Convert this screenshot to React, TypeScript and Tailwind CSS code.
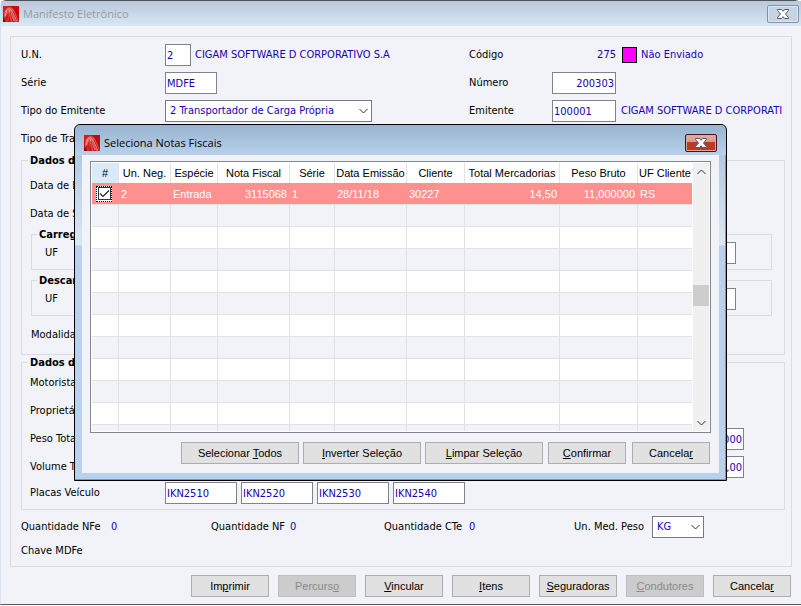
import { useState } from 'react'
import type { ReactNode } from 'react'

const COLUMNS = [
  { label: '#', width: 27, align: 'text-center' },
  { label: 'Un. Neg.', width: 52, align: 'text-left' },
  { label: 'Espécie', width: 47, align: 'text-left' },
  { label: 'Nota Fiscal', width: 72, align: 'text-right' },
  { label: 'Série', width: 45, align: 'text-left' },
  { label: 'Data Emissão', width: 72, align: 'text-left' },
  { label: 'Cliente', width: 58, align: 'text-left' },
  { label: 'Total Mercadorias', width: 95, align: 'text-right' },
  { label: 'Peso Bruto', width: 78, align: 'text-right' },
  { label: 'UF Cliente', width: 54, align: 'text-left' },
]

const NOTA = ['2', 'Entrada', '3115068', '1', '28/11/18', '30227', '14,50', '11,000000', 'RS']
const PLACAS = ['IKN2510', 'IKN2520', 'IKN2530', 'IKN2540']
const EMPTY_ROWS = 10

const inputClass = 'h-[22px] shrink-0 border border-[#7f838c] bg-white px-px text-[#1a00b0] outline-none'
const buttonClass =
  'h-[22px] border border-[#adadad] bg-[#e1e1e1] text-[11px] text-black outline-none disabled:border-[#bfbfbf] disabled:bg-[#cccccc] disabled:text-[#8a8a8a]'

function Logo() {
  return (
    <svg className="h-4 w-4 shrink-0" viewBox="0 0 16 16">
      <rect width="16" height="16" fill="#cf1014" />
      <path d="M0 0h7L2 5 0 9z" fill="#e0171a" />
      <path d="M9 0h7v14L12 5z" fill="#c40a0c" />
      <path d="M1 7Q2 2 6 1q4 0 6 5l4 10h-4L9 9l1 7H8L6 8l-1 8H3l1-7-3 4z" fill="#e0514d" />
      <path d="M2 6Q5 2 7 3q4 3 7 12M6 4l5 11M4 5L2 10" fill="none" stroke="#f6a8a2" strokeWidth=".8" />
      <path d="M7 6l3 10M5 7l-1 9M10 5l5 11" fill="none" stroke="#7e0a0a" strokeWidth=".6" />
      <path d="M0 11l3 5H0z" fill="#8d0506" />
    </svg>
  )
}

function CloseMark() {
  return (
    <svg className="h-[10px] w-3" viewBox="0 0 12 10">
      <path
        d="M.5 .5h4L6 2.300 7.500 .5h4v1L8.500 5l3 3.500v1h-4L6 7.700 4.500 9.500h-4v-1l3-3.500-3-3.500z"
        fill="#fff"
        stroke="#535968"
        strokeWidth="1"
      />
    </svg>
  )
}

function Chevron({ up = false, className = '' }: { up?: boolean; className?: string }) {
  return (
    <svg
      className={`pointer-events-none h-[6px] w-[9px] ${className}`}
      viewBox="0 0 9 6"
      fill="none"
      stroke="currentColor"
    >
      <path d={up ? 'M.5 5l4-4 4 4' : 'M.5 1l4 4 4-4'} />
    </svg>
  )
}

function Row({ label, id, children }: { label: string; id?: string; children?: ReactNode }) {
  return (
    <div className="flex h-7 items-center">
      <label htmlFor={id} className="w-36 shrink-0 whitespace-nowrap">{label}</label>
      {children}
    </div>
  )
}

function Group({ title, className, children }: { title: string; className: string; children: ReactNode }) {
  return (
    <fieldset className={`min-w-0 border border-[#dcdcdc] ${className}`}>
      <legend className="px-[2px] pt-[2px] leading-3 font-bold whitespace-nowrap">{title}</legend>
      {children}
    </fieldset>
  )
}

function Select({ id, value, className }: { id: string; value: string; className: string }) {
  return (
    <div className={`relative shrink-0 ${className}`}>
      <select
        id={id}
        defaultValue={value}
        className="h-[22px] w-full appearance-none border border-[#7a7a7a] bg-white pl-1 text-[#1a00b0] outline-none"
      >
        <option>{value}</option>
      </select>
      <Chevron className="absolute top-2 right-1 text-[#333]" />
    </div>
  )
}

function NotasDialog() {
  const [checked, setChecked] = useState(true)

  return (
    <div
      role="dialog"
      aria-labelledby="notas-title"
      className="absolute top-[124px] right-[74px] left-[74px] rounded-t-md border border-black bg-[linear-gradient(#a5bfdb,#dbe8f5_120px,#b9d1ea_121px)] px-[7px] pb-[7px] shadow-[inset_-1px_-1px_0_#35b5d5]"
    >
      <div className="-mx-[7px] flex h-[30px] items-center rounded-t-md bg-linear-to-b from-[#98b3d0] to-[#b9d1ea] pt-[6px] pr-[9px] pl-[9px]">
        <Logo />
        <h2 id="notas-title" className="ml-1 font-['Open_Sans',sans-serif] text-[11px] text-black">
          Seleciona Notas Fiscais
        </h2>
        <button
          aria-label="Fechar"
          className="ml-auto flex h-[18px] w-8 items-center justify-center rounded-xs border border-[#43131e] bg-linear-to-b from-[#e9aa9e] to-[#cf8071] shadow-[inset_0_0_0_1px_#e2a79c,inset_0_-9px_0_#b93a25]"
        >
          <CloseMark />
        </button>
      </div>

      <div className="bg-[#f2f3f9] px-2 pt-[6px] pb-[9px] font-['Liberation_Sans',Arial,sans-serif]">
        <div className="flex border border-[#828790] bg-white p-px">
          <table className="w-full table-fixed border-separate border-spacing-0 text-[11px]">
            <colgroup>
              {COLUMNS.map((c) => <col key={c.label} style={{ width: c.width }} />)}
            </colgroup>
            <thead>
              <tr className="h-5">
                {COLUMNS.map((c, i) => (
                  <th
                    key={c.label}
                    className={`p-0 text-center font-normal whitespace-nowrap ${i === 0 ? 'bg-[#d9ebf9]' : ''} ${
                      i < COLUMNS.length - 1 ? 'border-r border-[#e2e2e2]' : ''
                    }`}
                  >
                    {c.label}
                  </th>
                ))}
              </tr>
            </thead>
            <tbody>
              <tr className="h-[22px] bg-[#ff9090] text-white">
                <td className="border-b border-[#e2e2e2] p-0">
                  <label className="relative ml-1 flex h-4 w-4 items-center justify-center border border-dotted border-black bg-white">
                    <input
                      type="checkbox"
                      aria-label="Selecionar nota 3115068"
                      checked={checked}
                      onChange={(e) => setChecked(e.target.checked)}
                      className="h-[13px] w-[13px] appearance-none border border-[#333] bg-white"
                    />
                    {checked && (
                      <svg
                        className="pointer-events-none absolute h-[9px] w-[11px]"
                        viewBox="0 0 11 9"
                        fill="none"
                        stroke="#222"
                      >
                        <path d="M1 4.500l3 3L10 1.500" strokeWidth="1.200" />
                      </svg>
                    )}
                  </label>
                </td>
                {NOTA.map((value, i) => (
                  <td key={i} className={`border-b border-[#e2e2e2] pr-[3px] pl-[2px] py-0 ${COLUMNS[i + 1].align}`}>
                    {value}
                  </td>
                ))}
              </tr>
              {Array.from({ length: EMPTY_ROWS }).map((_, row) => (
                <tr key={row} className="h-[22px] odd:bg-white even:bg-[#f2f3f9]">
                  {COLUMNS.map((c, i) => (
                    <td key={c.label} className={`border-b border-[#e2e2e2] p-0 ${i < 9 ? 'border-r' : ''}`} />
                  ))}
                </tr>
              ))}
              <tr className="h-[6px] bg-[#f2f3f9]">
                {COLUMNS.map((c, i) => (
                  <td key={c.label} className={`border-[#e2e2e2] p-0 ${i < 9 ? 'border-r' : ''}`} />
                ))}
              </tr>
            </tbody>
          </table>

          {/* Scrollbar */}
          <div className="ml-px flex w-4 shrink-0 flex-col items-center bg-[#f0f0f0] text-[#303030]">
            <button aria-label="Rolar para cima" className="flex h-[17px] w-full items-center justify-center">
              <Chevron up />
            </button>
            <div className="w-full grow-[105]" />
            <div className="h-[21px] w-full bg-[#cdcdcd]" />
            <div className="w-full grow-[109]" />
            <button aria-label="Rolar para baixo" className="flex h-[17px] w-full items-center justify-center">
              <Chevron />
            </button>
          </div>
        </div>

        <div className="mt-[9px] flex justify-end gap-[5px] pr-px">
          <div className="flex gap-1">
            <button className={`${buttonClass} w-[118px]`}>Selecionar <u>T</u>odos</button>
            <button className={`${buttonClass} w-[118px]`}><u>I</u>nverter Seleção</button>
            <button className={`${buttonClass} w-[118px]`}><u>L</u>impar Seleção</button>
          </div>
          <div className="flex gap-[6px]">
            <button className={`${buttonClass} w-[78px]`}><u>C</u>onfirmar</button>
            <button className={`${buttonClass} w-[78px]`}>Cancela<u>r</u></button>
          </div>
        </div>
      </div>
    </div>
  )
}

export default function App() {
  return (
    <div className="relative min-h-screen overflow-hidden bg-white font-['DejaVu_Sans_Condensed','Noto_Sans',sans-serif] text-[11px] leading-4 text-black">
      <div className="rounded-t-md border-t border-b border-l border-t-[#50555c] border-b-[#50555c] border-l-[#d5e2f2] bg-[#f2f3f9]">
        <header className="flex h-[25px] items-center bg-linear-to-b from-[#b9c9db] to-[#d9e6f4] px-[2px] pt-px">
          <Logo />
          <h1 className="ml-1 font-['Open_Sans',sans-serif] text-[11px] text-[#969ba2]">Manifesto Eletrônico</h1>
          <button
            aria-label="Fechar"
            className="ml-auto flex h-[18px] w-8 items-center justify-center rounded-xs border border-[#8292aa] bg-[#c6d4e4] shadow-[inset_0_0_0_1px_#dce6f0]"
          >
            <CloseMark />
          </button>
        </header>

        <main className="px-[9px] pt-[10px] pb-[7px]">
          <div className="border border-[#dcdcdc] pt-1 pb-[5px]">
            <div className="grid grid-cols-[448px_minmax(0,1fr)] pr-[6px] pl-[10px]">
              <Row label="U.N." id="un">
                <input id="un" defaultValue="2" className={`${inputClass} w-[26px]`} />
                <span className="ml-1 whitespace-nowrap text-[#1a00b0]">CIGAM SOFTWARE D CORPORATIVO S.A</span>
              </Row>
              <div className="flex h-7 items-center">
                <span className="w-[83px] shrink-0">Código</span>
                <span className="w-16 shrink-0 text-right text-[#1a00b0]">275</span>
                <span className="ml-[6px] h-4 w-[15px] border border-black bg-[#ff00ff]" />
                <span className="ml-1 whitespace-nowrap text-[#1a00b0]">Não Enviado</span>
              </div>
              <Row label="Série" id="serie">
                <input id="serie" defaultValue="MDFE" className={`${inputClass} w-[52px]`} />
              </Row>
              <div className="flex h-7 items-center">
                <label htmlFor="numero" className="w-[83px] shrink-0">Número</label>
                <input id="numero" defaultValue="200303" className={`${inputClass} w-16 text-right`} />
              </div>
              <Row label="Tipo do Emitente" id="tipo-emitente">
                <Select id="tipo-emitente" value="2 Transportador de Carga Própria" className="w-[207px]" />
              </Row>
              <div className="flex h-7 items-center">
                <label htmlFor="emitente" className="w-[83px] shrink-0">Emitente</label>
                <input id="emitente" defaultValue="100001" className={`${inputClass} w-16`} />
                <span className="ml-[5px] whitespace-nowrap text-[#1a00b0]">CIGAM SOFTWARE D CORPORATI</span>
              </div>
              <Row label="Tipo de Tran" />
            </div>

            <Group title="Dados da Viagem" className="mr-[6px] ml-[10px] px-[6px] pb-[5px]">
              <div className="pt-[5px] pl-[2px]">
                <Row label="Data de Emissão" />
                <Row label="Data de Saída" />
              </div>
              <Group title="Carregamento" className="-mt-px mr-[6px] ml-[3px] px-[5px] pt-px pb-[5px]">
                <div className="flex items-center justify-between pr-[30px] pl-2">
                  <label htmlFor="uf-carga">UF</label>
                  <input id="uf-carga" className={`${inputClass} w-16`} />
                </div>
              </Group>
              <Group title="Descarregamento" className="mt-[3px] mr-[6px] ml-[3px] px-[5px] pt-px pb-[5px]">
                <div className="flex items-center justify-between pr-[30px] pl-2">
                  <label htmlFor="uf-descarga">UF</label>
                  <input id="uf-descarga" className={`${inputClass} w-16`} />
                </div>
              </Group>
              <div className="pt-[5px] pl-[3px]">
                <Row label="Modalidade" />
              </div>
            </Group>

            <Group title="Dados do Veículo" className="mr-[6px] ml-[10px] px-[6px] pb-1">
              <div className="pl-[2px]">
                <Row label="Motorista" />
                <Row label="Proprietário" />
                <div className="flex h-7 items-center justify-between pr-[34px]">
                  <label htmlFor="peso">Peso Total</label>
                  <input id="peso" defaultValue="0,000" className={`${inputClass} w-16 text-right`} />
                </div>
                <div className="flex h-7 items-center justify-between pr-[34px]">
                  <label htmlFor="volume">Volume Total</label>
                  <input id="volume" defaultValue="0,00" className={`${inputClass} w-16 text-right`} />
                </div>
                <div className="flex h-6 items-center gap-1">
                  <span className="w-[131px] shrink-0">Placas Veículo</span>
                  {PLACAS.map((placa) => (
                    <input key={placa} aria-label="Placa" defaultValue={placa} className={`${inputClass} w-[72px]`} />
                  ))}
                </div>
              </div>
            </Group>

            <div className="mt-[3px] flex h-7 items-center pl-[10px] whitespace-nowrap">
              <p className="flex w-[190px]">
                <span className="w-[90px]">Quantidade NFe</span>
                <span className="text-[#1a00b0]">0</span>
              </p>
              <p className="flex w-[173px]">
                <span className="w-[79px]">Quantidade NF</span>
                <span className="text-[#1a00b0]">0</span>
              </p>
              <p className="flex">
                <span className="w-[85px]">Quantidade CTe</span>
                <span className="text-[#1a00b0]">0</span>
              </p>
              <label htmlFor="unidade" className="mr-2 ml-auto">Un. Med. Peso</label>
              <Select id="unidade" value="KG" className="mr-[87px] w-[52px]" />
            </div>
            <p className="h-5 pl-[10px] leading-5">Chave MDFe</p>
          </div>

          <div className="mt-2 flex justify-end gap-[9px] pr-px font-['Liberation_Sans',Arial,sans-serif]">
            <button className={`${buttonClass} w-[78px]`}>Im<u>p</u>rimir</button>
            <button disabled className={`${buttonClass} w-[78px]`}>Percurs<u>o</u></button>
            <button className={`${buttonClass} w-[78px]`}><u>V</u>incular</button>
            <button className={`${buttonClass} w-[78px]`}><u>I</u>tens</button>
            <button className={`${buttonClass} w-[78px]`}><u>S</u>eguradoras</button>
            <button disabled className={`${buttonClass} w-[78px]`}><u>C</u>ondutores</button>
            <button className={`${buttonClass} w-[78px]`}>Cancela<u>r</u></button>
          </div>
        </main>
      </div>

      <NotasDialog />
    </div>
  )
}
